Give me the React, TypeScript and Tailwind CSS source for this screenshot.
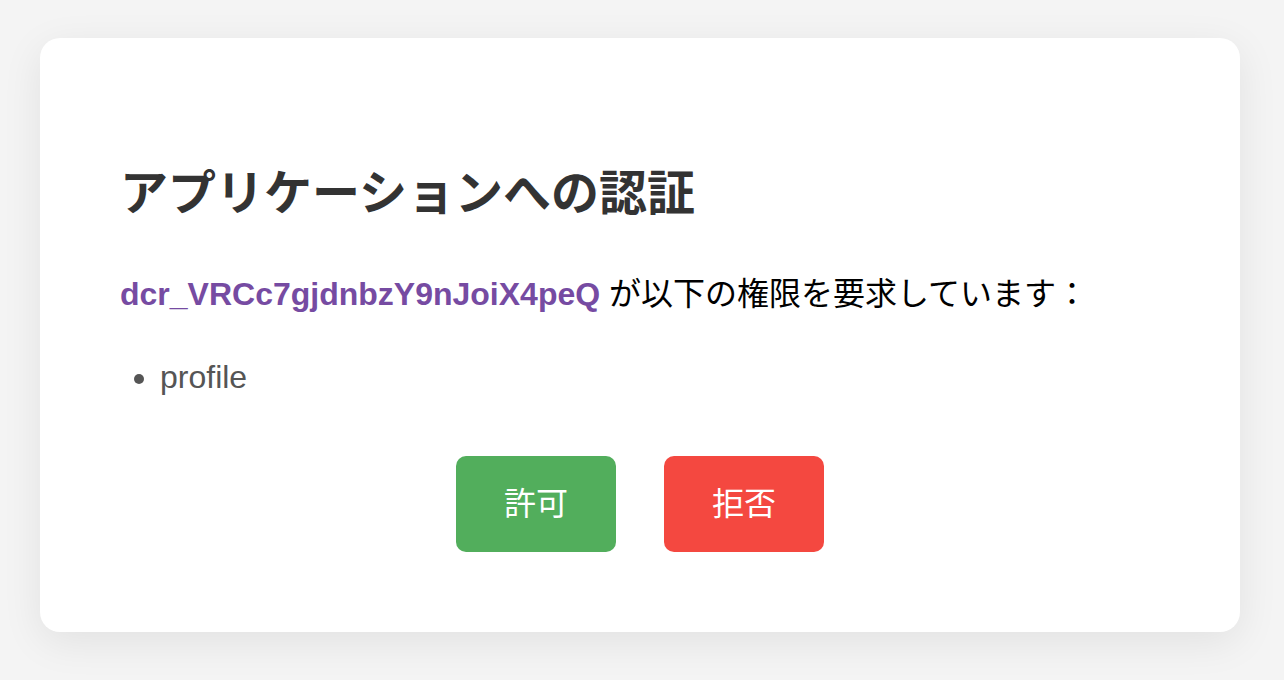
export default function App() {
  return (
    <div
      className="min-h-[680px] bg-[#f4f4f4] px-[40px] pt-[38px] pb-[48px]"
      style={{ fontFamily: '"Liberation Sans", "Noto Sans CJK JP", sans-serif' }}
    >
      <div className="w-[1200px] rounded-[20px] bg-white px-[80px] pt-[80px] pb-[80px] shadow-[0_10px_40px_rgba(0,0,0,0.08)]">
        <h1 className="mt-[40px] text-[48px] font-bold leading-[72px] text-[#333]">アプリケーションへの認証</h1>
        <p className="mt-[40px] text-[32px] leading-[48px] text-black">
          <span className="font-bold text-[#764ba2]">dcr_VRCc7gjdnbzY9nJoiX4peQ</span> が以下の権限を要求しています：
        </p>
        <ul className="mt-[35px] list-disc pl-[40px] text-[32px] leading-[48px] text-[#555]">
          <li>profile</li>
        </ul>
        <div className="mt-[55px] flex justify-center gap-[48px]">
          <button type="button" className="rounded-[10px] bg-[#52ae5c] px-[48px] py-[24px] text-[32px] leading-[48px] text-white">
            許可
          </button>
          <button type="button" className="rounded-[10px] bg-[#f44840] px-[48px] py-[24px] text-[32px] leading-[48px] text-white">
            拒否
          </button>
        </div>
      </div>
    </div>
  )
}
